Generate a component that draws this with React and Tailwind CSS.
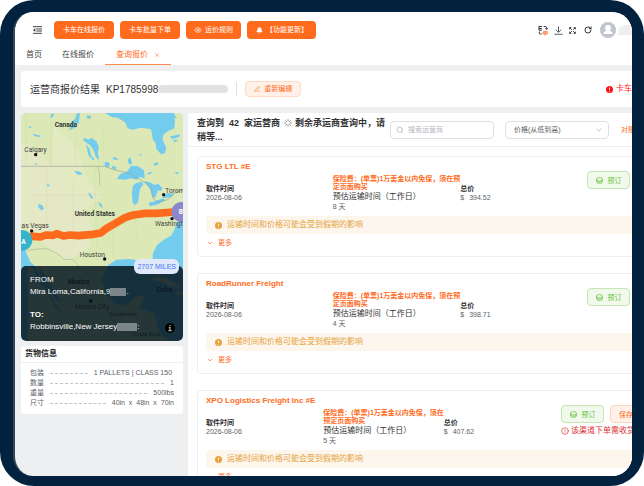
import React from "react";
import { Bell, ChevronDown, CircleAlert, Eye, Loader, PenLine, RotateCw, Search, X } from "lucide-react";

const quotes = [
  { name: "STG LTL #E", days: "8 天", price: "394.52" },
  { name: "RoadRunner Freight", days: "4 天", price: "398.71" },
  { name: "XPO Logistics Freight Inc #E", days: "5 天", price: "407.62", extra: true },
];

const cargo = [
  ["包装", "1 PALLETS | CLASS 150 "],
  ["数量", "1"],
  ["重量", "500lbs"],
  ["尺寸", "40in  x  48in  x  70in"],
];

function NavButton({ children }) {
  return (
    <button className="flex h-[18px] items-center gap-[3px] rounded-sm bg-[#ff6b1c] px-2 text-[7px] text-white">
      {children}
    </button>
  );
}

function SolidAlert({ className }) {
  return (
    <svg viewBox="0 0 16 16" className={className} aria-hidden="true">
      <circle cx="8" cy="8" r="8" fill="currentColor" />
      <path d="M8 3.5v5.5M8 11v2" stroke="#fff" strokeWidth="2" />
    </svg>
  );
}

function CoinStack() {
  return (
    <svg viewBox="0 0 24 24" className="size-[7px]" fill="none" stroke="currentColor" strokeWidth="2.5" aria-hidden="true">
      <ellipse cx="12" cy="8" rx="10" ry="6" />
      <path d="M2 8v8c0 3.500 4.500 6 10 6s10-2.500 10-6V8M2 12c0 3.500 4.500 6 10 6s10-2.500 10-6" />
    </svg>
  );
}

function Header() {
  return (
    <header className="flex h-[53px] shrink-0 flex-col justify-between bg-white pl-[11px]">
      <div className="flex items-center justify-between pt-[9px]">
        <div className="flex items-center gap-[6px]">
          <button aria-label="菜单" className="mr-[6px] ml-[7px]">
            <svg viewBox="0 0 27 24" className="h-2 w-[9px]" fill="none" stroke="#444" strokeWidth="3">
              <path d="M0 2h27M10 9h17M10 15h17M0 22h27" />
              <path d="M7 6v12L0 12z" fill="#444" stroke="none" />
            </svg>
          </button>
          <NavButton><span className="px-px">卡车在线报价</span></NavButton>
          <NavButton><span className="px-px">卡车批量下单</span></NavButton>
          <NavButton><Eye size={8} />运价规则</NavButton>
          <NavButton><Bell size={7} fill="white" className="ml-px" />【功能更新】</NavButton>
        </div>
        <div className="flex shrink-0 items-center gap-[6px] text-[#333]">
          <button aria-label="语言">
            <svg viewBox="0 0 30 32" className="h-[11px] w-[10px]" fill="none" stroke="#333" strokeWidth="3">
              <path d="M3 4h9M3 10h8M3 15h9M3 3v12M17 4h6q3 0 3 4v3M4 19v4q0 4 4 4h3" />
              <path d="M22 9l4 4 4-4" />
              <path d="M15 20h13v6H15zM21 17v14" stroke="#ff7a3a" />
            </svg>
          </button>
          <button aria-label="下载">
            <svg viewBox="0 0 24 24" className="size-[9px]" fill="none" stroke="#4a5560" strokeWidth="2.5">
              <path d="M12 1v15M5 10l7 7 7-7M1 22h22" />
            </svg>
          </button>
          <button aria-label="全屏">
            <svg viewBox="0 0 24 24" className="size-[7px]" fill="none" stroke="#333" strokeWidth="3">
              <path d="M3 3l7 7M21 3l-7 7M3 21l7-7M21 21l-7-7M2 8V2h6M16 2h6v6M2 16v6h6M16 22h6v-6" />
            </svg>
          </button>
          <button aria-label="刷新" className="ml-[2px]"><RotateCw size={8} strokeWidth={3} /></button>
          <svg viewBox="0 0 32 32" className="ml-[2px] size-4" aria-hidden="true">
            <circle cx="16" cy="16" r="16" fill="#c0c4cc" />
            <circle cx="16" cy="12" r="6" fill="#fff" />
            <path d="M7 24q0-7 9-7t9 7z" fill="#fff" />
          </svg>
          <span className="-ml-1 h-[10px] w-[14px] rounded-tl-lg bg-[#efefef]" />
        </div>
      </div>
      <nav className="flex h-[19px] text-[8px] leading-[18px] text-[#444]">
        <a href="#home">首页</a>
        <a href="#quote" className="ml-5">在线报价</a>
        <a href="#result" className="ml-[11px] flex items-center gap-[6px] border-b border-[#ff8a50] px-[11px] text-[#ff6b1c]">
          查询报价<X size={6} />
        </a>
      </nav>
    </header>
  );
}

function RouteMap() {
  return (
    <section className="relative h-[228px] overflow-hidden rounded-[5px] bg-[#dde9b8]">
      <svg viewBox="33 24 486 684" preserveAspectRatio="xMidYMid slice" className="h-full w-full" fontFamily="Roboto, 'Liberation Sans', sans-serif" fontSize="20" fill="#444">
        <path d="M33 24h486v684H33z" fill="#dce9b6" />
        <path d="M33 110q60 20 100 90t80 110q50 40 20 120l-60 40L33 360z" fill="#e6e7c8" opacity=".8" />
        <path d="M130 60q80 60 90 120t60 90l-60 50-100-70z" fill="#e5e8c6" opacity=".7" />
        <g fill="#73cbee">
          <path d="M285 24l20 12 18 2 22 14 8 18 14 4 26-6 30 4 6 34 8 8 2 18 14 16 12-4 4-16-12-26 4-14 14-10 18-8 2-24-4-22z" />
          <path d="M222 98l14 6 8-6 14 10 8 16-2 24 4 16-10-6-6-20-12-18-10-6-10-8zM228 118l10 12 6 24 10 8-4 4-14-14z" />
          <path d="M320 222l12-16 18-6 14-18 20 2 18 12 2 24-14-4-10 8-18-4-14 4z" />
          <path d="M368 244l10-10 18-4 4 8-10 14-6 40-8 8-8-6-2-28z" />
          <path d="M402 228l18 4 14 8 10-4 14 14-6 8-8-2-8 22-10-2-4-20-8-12z" />
          <path d="M416 294l20-6 24-8 6 6-22 12-24 6zM456 272l18-8 18 2-8 10-24 4z" />
          <path d="M178 76l20-10-4-12 12 2 4-32-10 2-4 16-12 8zM124 26h8l-4 10-8 2zM230 30l14 4-4 8-8-2zM84 298l12 2 6 12-8 4-8-8zM192 198l18 2 8 8-14 2zM236 262l6 6 8 10-4 4-10-12zM264 292l10 4 4 14-8-6zM284 172l10-2 6 8-6 10-10-4zM305 182l14 4-2 8-10-4zM354 162l8-4 4 16-6 6-6-8zM310 156l14 4-2 5-14-2zM480 94l20-4 10-2-2 8-22 6zM488 104l18 2-12 6zM430 176l12-4 4 6-12 4zM70 86l12 4 12 2-6 4-16-4zM54 64l12 2-8 4zM492 200l18 4-10 4zM474 24l18 2 8 12-12 2zM110 236l10 4-6 6zM386 150l6-4 4 6zM76 174l8 3-7 4zM410 205l20-6-12 10z" />
          <path d="M33 405l16 38 12 28 16 14 10 24 18 28 28 54 24 34-18-14-30-52-28-38-16-36-12 1v222H33z" />
          <path d="M519 338l-18 14-8 22-10 18-18 10-24 18-12 24-2 26 16 22 4 22-14-6-16-32-24-8-34-6-40 2-24 16-22 44 18 48 24 24 36 4 22-24 30-4-14 38 44 14 12 56 36 30h76z" />
          <path d="M88 480l4 10 22 38 28 44 14 20-20-10-28-42-20-36z" />
        </g>
        <g fill="#d9e8b6">
          <path d="M418 525q34-18 66 4l28 18-28-2-28-14zM498 560l21-3v13l-22 1z" />
        </g>
        <g fill="none" stroke="#9aa39b" strokeWidth="2">
          <path d="M33 184h252l32 12 40 8 40 24 26 18 6 34 14 12 30-8 24-22 22-8" />
          <path d="M52 436l54-6 34 14 24 20 24-2 20 24 18 10 4 24M264 184l4 20 2 38" opacity=".7" />
        </g>
        <g fill="none" stroke="#bac78f" strokeWidth="1" opacity=".5">
          <path d="M48 24v160M126 24l-4 160M196 24v160M280 60v120M70 270h220M110 184v180M190 220v200M254 184l6 250M310 300v160M370 300l14 120" />
        </g>
        <path d="M45 398L70 394 92 396 108 390 130 391 140 386 160 393 180 390 205 392 250 388 272 384 290 370 318 354 345 338 370 330 405 325 440 325 490 321" fill="none" stroke="#ff6b1c" strokeWidth="23" strokeLinejoin="round" />
        <circle cx="36" cy="406" r="31" fill="#35b5cd" />
        <circle cx="514" cy="321" r="30" fill="#8c86cb" />
        <g fill="#fff" fontSize="20" fontWeight="700"><text x="34" y="416">A</text><text x="506" y="328">B</text></g>
        <g fontWeight="700" fill="#333"><text x="134" y="66">Canada</text><text x="194" y="334">United States</text><text x="173" y="536">Mexico</text><text x="440" y="560">Cuba</text></g>
        <text x="43" y="140">Calgary</text>
        <text x="466" y="264">Toronto</text>
        <text x="435" y="363">Washington</text>
        <text x="24" y="368">Las Vegas</text>
        <text x="209" y="457">Houston</text>
        <text x="194" y="612">Mexico City</text>
        <g fontSize="17"><text x="298" y="634">Guatemala</text><text x="368" y="694">Costa Rica</text></g>
        <g fill="#111"><circle cx="77" cy="149" r="5" /><circle cx="461" cy="269" r="5" /><circle cx="486" cy="341" r="5" /><circle cx="65" cy="378" r="5" /><circle cx="284" cy="462" r="5" /><circle cx="242" cy="588" r="6" /></g>
      </svg>
      <div className="absolute inset-x-0 bottom-0 h-[75px] rounded-[5px] bg-[#06151f]/85 px-[9px] pt-2 text-[8px] leading-3 text-white">
        <p>FROM</p>
        <p className="flex items-center">Mira Loma,California,9<span className="h-2 w-4 bg-[#7b858b]" />.</p>
        <p className="mt-[11px] font-bold">TO:</p>
        <p className="flex items-center">Robbinsville,New Jersey<span className="h-2 w-5 bg-[#7b858b]" />:</p>
      </div>
      <span className="absolute right-1 bottom-[67px] rounded-[6px] bg-[#dfe9fb] px-[3px] text-[7px] leading-[15px] text-[#3f74f5]">2707 MILES</span>
      <svg viewBox="0 0 24 24" className="absolute right-2 bottom-2 size-[10px]" aria-hidden="true">
        <circle cx="12" cy="12" r="12" fill="#000" />
        <path d="M12 5v3M9 11h3v7M8 18h8" stroke="#a9b0b3" strokeWidth="3" fill="none" />
      </svg>
    </section>
  );
}

function CargoInfo() {
  return (
    <section className="mt-[5px] rounded-[3px] bg-white">
      <h2 className="border-b border-[#ebeef5] px-1 text-[8px] leading-4 font-bold text-[#222]">货物信息</h2>
      <dl className="px-[9px] pt-[5px] pb-[6px] text-[7px] leading-[10px] text-[#606266]">
        {cargo.map(([label, value]) => (
          <div key={label} className="flex items-center gap-[6px]">
            <dt>{label}</dt>
            <span className="h-0 flex-1 border-t border-dashed border-[#c0c4cc]" />
            <dd className="whitespace-pre">{value}</dd>
          </div>
        ))}
      </dl>
    </section>
  );
}

function QuoteCard({ name, days, price, extra }) {
  return (
    <article className="h-[101px] rounded-sm border border-[#ebeef5] px-2">
      <h3 className="mt-1 text-[8px] leading-3 font-bold text-[#ff6b1c]">{name}</h3>
      <div className="flex h-[43px] text-[7px] leading-[9px] text-[#606266]">
        <div className="flex-1 pt-[11px]">
          <p className="font-bold text-[#303133]">取件时间</p>
          <p>2026-08-06</p>
        </div>
        <div className="flex-1">
          <p className="pt-[2px] leading-2 font-bold whitespace-pre text-[#ff6b1c]">
            {extra ? "保险费：(单票)1万美金以内免保，须在\n预定页面购买" : "保险费：(单票)1万美金以内免保，须在预\n定页面购买"}
          </p>
          <p className="text-[8px] leading-[11px] whitespace-nowrap text-[#303133]">预估运输时间（工作日）</p>
          <p className="leading-[10px]">{days}</p>
        </div>
        <div className="flex-1 pt-[11px]">
          <p className="font-bold text-[#303133]">总价</p>
          <p className="flex gap-[5px]"><span>$</span>{price}</p>
        </div>
        <div className={extra ? "w-[111px] shrink-0" : "w-[85px] shrink-0"}>
          <div className="-mt-[2px] flex gap-[6px]">
            <button className="flex h-[18px] w-[43px] items-center justify-center gap-[5px] rounded-sm border border-[#c2e7b0] bg-[#f0f9eb] text-[#67c23a]">
              <CoinStack />预订
            </button>
            {extra && <button className="h-[18px] rounded-sm border border-[#ffd3bd] bg-[#fff0e8] px-2 text-[#ff6b1c]">保存报价</button>}
          </div>
          {extra && (
            <p className="mt-[2px] flex items-center gap-[2px] text-[8px] leading-3 whitespace-nowrap text-[#dc3038]">
              <CircleAlert size={8} />该渠道下单需收货
            </p>
          )}
        </div>
      </div>
      <p className="flex h-[18px] items-center gap-[5px] rounded-[3px] bg-[#fdf6ec] px-[9px] text-[8px] text-[#e6a23c]">
        <SolidAlert className="size-[7px]" />运输时间和价格可能会受到假期的影响
      </p>
      <button className="mt-1 flex h-[10px] items-center gap-[4px] text-[7px] text-[#ff6b1c]">
        <ChevronDown size={8} />更多
      </button>
    </article>
  );
}

function Results() {
  return (
    <main className="min-w-0 flex-1 rounded-l-[3px] bg-white">
      <div className="flex h-[34px] items-start border-b border-[#ebeef5] pt-[3px] pl-[9px]">
        <h2 className="w-[192px] shrink-0 text-[9px] leading-[14px] font-bold whitespace-pre-wrap text-[#303133]">
          {"查询到  42  家运营商 "}
          <Loader size={8} className="mx-px inline-block align-[-1px] text-[#555]" />
          {" 剩余承运商查询中，请稍等..."}
        </h2>
        <label className="mt-[5px] ml-px flex h-[18px] w-[104px] shrink-0 items-center gap-1 rounded-sm border border-[#dcdfe6] px-[5px] text-[#a8abb2]">
          <Search size={8} className="shrink-0" />
          <input aria-label="搜索运营商" placeholder="搜索运营商" className="w-full min-w-0 text-[7px] outline-none placeholder:text-[#b4b8c0]" />
        </label>
        <div className="mt-[5px] ml-[11px] grid h-[18px] w-[104px] shrink-0 items-center rounded-sm border border-[#dcdfe6]">
          <select aria-label="排序" className="col-start-1 row-start-1 h-full w-full appearance-none px-2 text-[7px] text-[#606266] outline-none">
            <option>价格(从低到高)</option>
          </select>
          <ChevronDown size={8} className="pointer-events-none col-start-1 row-start-1 mr-[5px] justify-self-end text-[#a8abb2]" />
        </div>
        <a href="#compare" className="mt-[5px] ml-3 text-[7px] leading-[18px] whitespace-nowrap text-[#ff6b1c]">对账</a>
      </div>
      <div className="-mr-[49px] flex flex-col gap-4 pt-[9px] pl-[9px]">
        {quotes.map((q) => <QuoteCard key={q.name} {...q} />)}
      </div>
    </main>
  );
}

export default function App() {
  return (
    <div className="h-screen bg-white font-['Liberation_Sans','Noto_Sans_CJK_SC',sans-serif]">
      <div className="h-full rounded-[34px] bg-[#03223f] pt-3 pr-3 pb-[10px] pl-[13px]">
        <div className="flex h-full flex-col overflow-hidden rounded-[20px] border-l-2 border-[#3a4652] bg-[#eeeff1]">
          <Header />
          <section className="mt-[6px] ml-[6px] flex h-9 shrink-0 items-center rounded-l-[3px] bg-white pl-[9px]">
            <h1 className="flex items-center gap-[6px] text-[10px] whitespace-nowrap text-[#303133]">
              运营商报价结果
              <span className="flex items-center">KP1785998<span className="h-2 w-[70px] rounded-sm bg-[#e2e2e2]" /></span>
            </h1>
            <span className="mx-2 h-[14px] w-px bg-[#dcdfe6]" />
            <button className="flex h-4 items-center gap-1 rounded-sm border border-[#ffd8c6] bg-[#fff0e8] px-2 text-[7px] text-[#ff6b1c]">
              <PenLine size={6} />重新编辑
            </button>
            <p className="ml-auto flex shrink-0 items-center gap-[3px] text-[8px] text-[#ff1414]">
              <SolidAlert className="size-[7px]" />卡车
            </p>
          </section>
          <div className="mt-[6px] ml-[6px] flex min-h-0 flex-1 gap-[5px]">
            <aside className="w-[162px] shrink-0">
              <RouteMap />
              <CargoInfo />
            </aside>
            <Results />
          </div>
        </div>
      </div>
    </div>
  );
}
